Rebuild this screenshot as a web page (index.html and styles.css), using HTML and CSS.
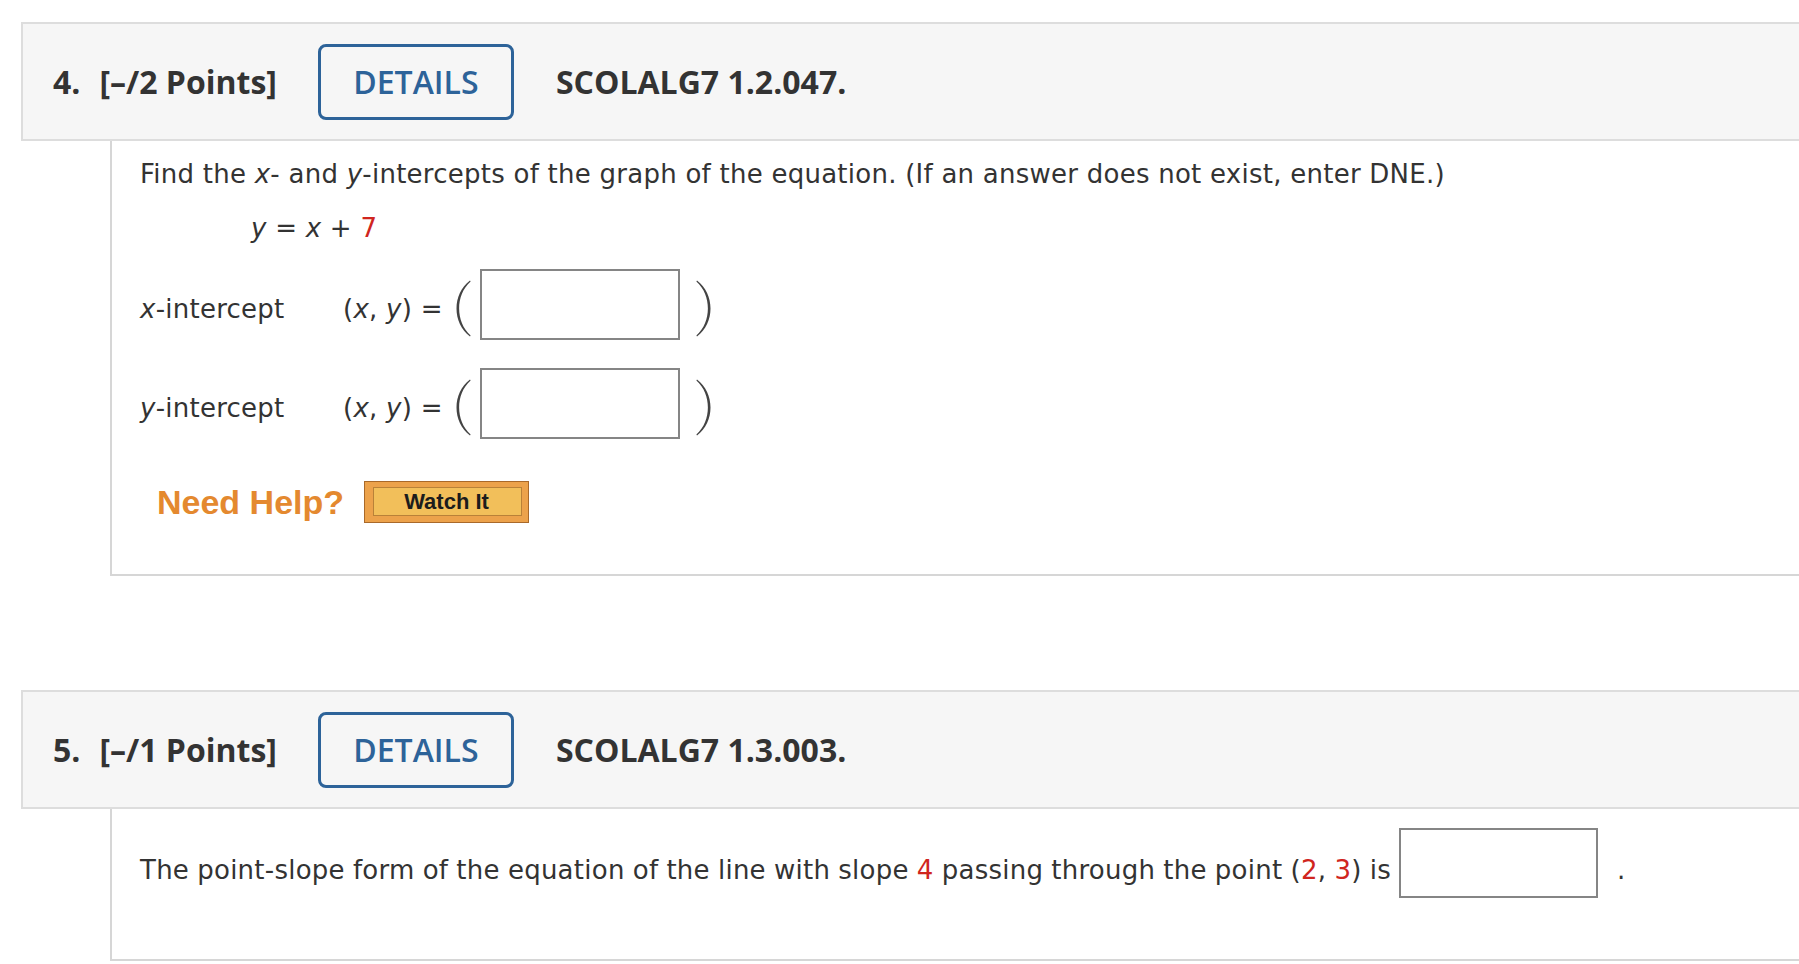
FILE: index.html
```html
<!DOCTYPE html>
<html>
<head>
<meta charset="utf-8">
<title>Questions</title>
<link rel="stylesheet" href="styles.css">
</head>
<body>
<div class="question q4">
  <div class="q-header">
    <span class="q-num">4.</span>
    <span class="q-points">[–/2 Points]</span>
    <span class="details-btn">DETAILS</span>
    <span class="q-code">SCOLALG7 1.2.047.</span>
  </div>
  <div class="q-body body-4">
    <p class="prompt">Find the <i>x</i>- and <i>y</i>-intercepts of the graph of the equation. (If an answer does not exist, enter DNE.)</p>
    <p class="equation"><i>y</i> = <i>x</i> + <span class="red">7</span></p>
    <div class="answer-row first"><span class="label"><i>x</i>-intercept</span><span class="pair">(<i>x</i>, <i>y</i>) =</span><svg class="paren open" width="16" height="57" viewBox="0 0 16 57"><path d="M15 0.5 C-3 14 -3 43 15 56.5 L15.6 55.5 C0.3 42 0.3 15 15.6 1.5 Z"/></svg><span class="answer-box"></span><svg class="paren close" width="16" height="57" viewBox="0 0 16 57"><path d="M1 0.5 C19 14 19 43 1 56.5 L0.4 55.5 C15.7 42 15.7 15 0.4 1.5 Z"/></svg></div>
    <div class="answer-row second"><span class="label"><i>y</i>-intercept</span><span class="pair">(<i>x</i>, <i>y</i>) =</span><svg class="paren open" width="16" height="57" viewBox="0 0 16 57"><path d="M15 0.5 C-3 14 -3 43 15 56.5 L15.6 55.5 C0.3 42 0.3 15 15.6 1.5 Z"/></svg><span class="answer-box"></span><svg class="paren close" width="16" height="57" viewBox="0 0 16 57"><path d="M1 0.5 C19 14 19 43 1 56.5 L0.4 55.5 C15.7 42 15.7 15 0.4 1.5 Z"/></svg></div>
    <div class="help-row">
      <span class="need-help">Need Help?</span>
      <span class="watch-btn"><span class="watch-inner">Watch It</span></span>
    </div>
  </div>
</div>

<div class="question q5">
  <div class="q-header">
    <span class="q-num">5.</span>
    <span class="q-points">[–/1 Points]</span>
    <span class="details-btn">DETAILS</span>
    <span class="q-code">SCOLALG7 1.3.003.</span>
  </div>
  <div class="q-body body-5">
    <p class="slope-line">The point-slope form of the equation of the line with slope <span class="red">4</span> passing through the point (<span class="red">2</span>, <span class="red">3</span>) is <span class="answer-box inline"></span><span class="period">.</span></p>
  </div>
</div>
</body>
</html>
```

FILE: styles.css
```css
html, body {
  margin: 0;
  padding: 0;
  background: #ffffff;
}

body {
  overflow: hidden;
}

.question {
  margin-left: 21px;
}

.q4 {
  margin-top: 22px;
}

.q5 {
  margin-top: 114px;
}

.q-header {
  display: flex;
  align-items: center;
  height: 115px;
  border: 2px solid #dddddd;
  border-right: none;
  background: #f6f6f6;
  padding-left: 30px;
  font-family: "Open Sans", "Liberation Sans", sans-serif;
  font-weight: 700;
  font-size: 32px;
  color: #333333;
}

.q-num {
  margin-right: 19px;
}

.details-btn {
  box-sizing: border-box;
  width: 196px;
  height: 76px;
  margin-left: 41px;
  margin-right: 42px;
  border: 3px solid #2d6399;
  border-radius: 8px;
  display: flex;
  align-items: center;
  justify-content: center;
  color: #2d6399;
  font-weight: 600;
  font-size: 32px;
}

.q-body {
  margin-left: 89px;
  border-left: 2px solid #d6d6d6;
  border-bottom: 2px solid #d6d6d6;
  padding-left: 28px;
  font-family: "DejaVu Sans", Verdana, sans-serif;
  font-size: 26px;
  letter-spacing: 0.25px;
  line-height: 36px;
  color: #333333;
}

.body-4 {
  padding-top: 15px;
  padding-bottom: 51px;
}

.body-5 {
  padding-top: 19px;
  padding-bottom: 61px;
}

.q-body p {
  margin: 0;
}

.q-body i {
  font-style: oblique;
}

.red {
  color: #d0251e;
}

.equation {
  margin-top: 18px !important;
  padding-left: 111px;
}

.answer-row {
  white-space: nowrap;
}

.answer-row.first {
  margin-top: 23px;
}

.answer-row.second {
  margin-top: 28px;
}

.label {
  display: inline-block;
  width: 203px;
}

.pair {
  display: inline-block;
  width: 112px;
}

.paren {
  display: inline-block;
  vertical-align: -19px;
}

.paren path {
  fill: #444444;
}

.paren.open {
  margin-right: 9px;
}

.paren.close {
  margin-left: 16px;
}

.answer-box {
  display: inline-block;
  box-sizing: border-box;
  width: 200px;
  height: 71px;
  border: 2px solid #858585;
  background: #ffffff;
  vertical-align: -22px;
}

.slope-line {
  word-spacing: -0.4px;
}

.answer-box.inline {
  width: 199px;
  height: 70px;
  vertical-align: -19px;
}

.period {
  margin-left: 19px;
}

.help-row {
  display: flex;
  align-items: center;
  margin-top: 42px;
  padding-left: 17px;
  letter-spacing: 0;
}

.need-help {
  font-family: "Liberation Sans", Arial, sans-serif;
  font-weight: 700;
  font-size: 34px;
  line-height: 42px;
  color: #e4892f;
}

.watch-btn {
  box-sizing: border-box;
  width: 165px;
  height: 42px;
  margin-left: 20px;
  border: 1px solid #a9692a;
  background: #eca24b;
  padding: 5px 6px 6px 8px;
  display: flex;
}

.watch-inner {
  flex: 1;
  display: flex;
  align-items: center;
  justify-content: center;
  border: 1px solid #b98138;
  background: #f2bf5a;
  font-family: "Liberation Sans", Arial, sans-serif;
  font-weight: 700;
  font-size: 22px;
  line-height: 1;
  color: #1c1c1c;
  padding-right: 2px;
}
```
